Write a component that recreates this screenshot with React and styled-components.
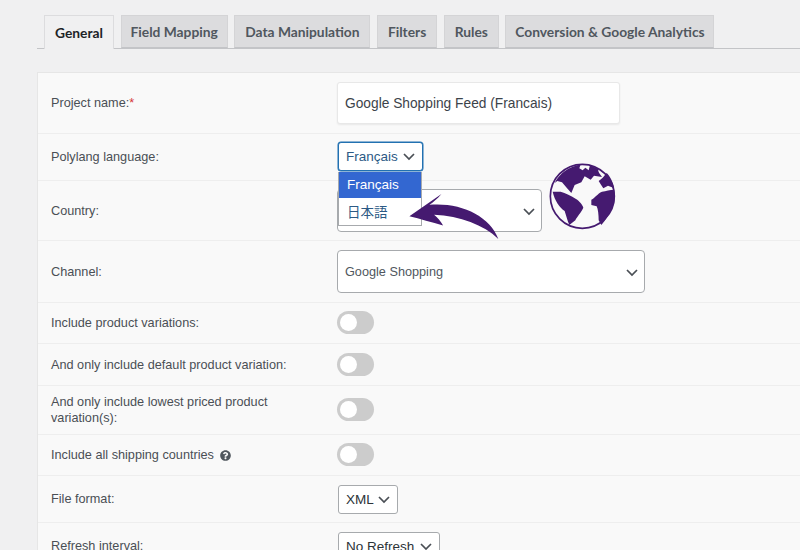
import React from 'react';
import styled, { createGlobalStyle } from 'styled-components';
import { FaQuestionCircle } from 'react-icons/fa';

const GlobalStyle = createGlobalStyle`
  html, body {
    margin: 0;
    padding: 0;
    background: #f0f0f1;
  }
`;

const Page = styled.div`
  position: relative;
  width: 800px;
  height: 550px;
  overflow: hidden;
  padding: 15px 0 0 37px;
  box-sizing: border-box;
  font-family: 'Liberation Sans', Arial, sans-serif;
  color: #4a4f55;
`;

const TabBar = styled.div`
  display: flex;
  gap: 6.7px;
  height: 33px;
  padding-left: 7px;
  border-bottom: 1px solid #c3c4c7;
`;

const Tab = styled.div`
  display: flex;
  align-items: center;
  box-sizing: border-box;
  height: ${(props) => (props.$active ? '34px' : '33px')};
  width: ${(props) => props.$width}px;
  justify-content: center;
  font-family: Lato, sans-serif;
  font-size: 13.8px;
  font-weight: 700;
  color: ${(props) => (props.$active ? '#1d2327' : '#50575e')};
  background: ${(props) => (props.$active ? '#f0f0f1' : '#dcdcde')};
  border: 1px solid ${(props) => (props.$active ? '#dcdcde' : '#d4d4d6')};
  border-bottom: ${(props) => (props.$active ? 'none' : '1px solid #c3c4c7')};
`;

const Panel = styled.div`
  margin-top: 23px;
  background: #f9f9f9;
  border-top: 1px solid #e6e6e6;
  border-left: 1px solid #e6e6e6;
`;

const Row = styled.div`
  display: grid;
  grid-template-columns: 286px 1fr;
  align-items: center;
  box-sizing: border-box;
  height: ${(props) => props.$height}px;
  padding-left: 13px;
  border-bottom: 1px solid #eeeeee;
`;

const Label = styled.div`
  max-width: 240px;
  font-size: 12.7px;
  line-height: 16px;
`;

const Required = styled.span`
  color: #d63638;
`;

const HelpIcon = styled(FaQuestionCircle)`
  margin-left: 6px;
  width: 11px;
  height: 11px;
  vertical-align: -1.5px;
  color: #50575e;
`;

const TextField = styled.div`
  display: flex;
  align-items: center;
  box-sizing: border-box;
  width: 283px;
  height: 42px;
  padding-left: 7px;
  font-size: 13.75px;
  color: #3c434a;
  background: #fff;
  border: 1px solid #e8e8e8;
  border-radius: 3px;
  box-shadow: 0 1px 2px rgba(0, 0, 0, 0.07);
`;

const SelectBox = styled.div`
  display: flex;
  align-items: center;
  justify-content: space-between;
  box-sizing: border-box;
  width: ${(props) => props.$width}px;
  height: 43px;
  padding: 0 4px 0 7px;
  font-size: 12.7px;
  color: #50575e;
  background: #fff;
  border: 1px solid #a7aaad;
  border-radius: 4px;
`;

const SmallSelect = styled.div`
  display: flex;
  align-items: center;
  justify-content: space-between;
  box-sizing: border-box;
  width: ${(props) => props.$width}px;
  height: 29px;
  margin-left: 1px;
  padding: 0 5px 0 7px;
  font-size: 13.5px;
  color: ${(props) => (props.$focused ? '#2c5a85' : '#2c3338')};
  background: #fff;
  border: 1px solid ${(props) => (props.$focused ? '#2271b1' : '#a7aaad')};
  border-radius: 3px;
  box-shadow: ${(props) => (props.$focused ? '0 0 0 0.5px #2271b1' : 'none')};
  white-space: nowrap;
`;

const Chevron = styled.svg`
  flex: none;
  width: 16px;
  height: 16px;
  margin-left: ${(props) => (props.$end ? 'auto' : '0')};
  fill: none;
  stroke: #4a4f55;
  stroke-width: 1.7;
`;

const ArrowDown = ({ end }) => (
  <Chevron viewBox="0 0 16 16" $end={end}>
    <polyline points="3,6 8,11 13,6" />
  </Chevron>
);

const LanguageSelect = styled.div`
  position: relative;
  margin-bottom: 2px;
`;

const LanguageMenu = styled.div`
  position: absolute;
  top: 30px;
  left: 1px;
  z-index: 2;
  box-sizing: border-box;
  width: 84px;
  height: 54px;
  background: #fff;
  border: 1px solid #a7aaad;
  border-top: none;
`;

const LanguageOption = styled.div`
  display: flex;
  align-items: center;
  height: 26px;
  padding-left: 8px;
  font-family: 'Liberation Sans', 'Noto Sans CJK JP', sans-serif;
  font-size: 13.5px;
  color: ${(props) => (props.$selected ? '#fff' : '#2c5a85')};
  background: ${(props) => (props.$selected ? '#3367d1' : '#fff')};
`;

const Toggle = styled.div`
  display: flex;
  align-items: center;
  box-sizing: border-box;
  width: 37px;
  height: 23px;
  margin-bottom: 1px;
  padding-left: 3px;
  background: #cccccc;
  border-radius: 12px;
`;

const Knob = styled.div`
  width: 17px;
  height: 17px;
  background: #fff;
  border-radius: 50%;
`;

const ArrowDrawing = styled.svg`
  position: absolute;
  left: 405px;
  top: 190px;
  z-index: 3;
  width: 97px;
  height: 52px;
`;

const GlobeDrawing = styled.svg`
  position: absolute;
  left: 540px;
  top: 155px;
  z-index: 3;
  width: 85px;
  height: 80px;
`;

const tabs = [
  { label: 'General', width: 70, active: true },
  { label: 'Field Mapping', width: 107 },
  { label: 'Data Manipulation', width: 136 },
  { label: 'Filters', width: 60 },
  { label: 'Rules', width: 55 },
  { label: 'Conversion & Google Analytics', width: 209 },
];

const toggleRows = [
  { label: 'Include product variations:', height: 41 },
  { label: 'And only include default product variation:', height: 42 },
  { label: 'And only include lowest priced product variation(s):', height: 49 },
];

const App = () => (
  <Page>
    <GlobalStyle />
    <TabBar>
      {tabs.map((tab) => (
        <Tab key={tab.label} $active={tab.active} $width={tab.width}>
          {tab.label}
        </Tab>
      ))}
    </TabBar>
    <Panel>
      <Row $height={61}>
        <Label>
          Project name:<Required>*</Required>
        </Label>
        <TextField>Google Shopping Feed (Francais)</TextField>
      </Row>
      <Row $height={47}>
        <Label>Polylang language:</Label>
        <LanguageSelect>
          <SmallSelect $width={85} $focused>
            Français
            <ArrowDown />
          </SmallSelect>
          <LanguageMenu>
            <LanguageOption $selected>Français</LanguageOption>
            <LanguageOption>日本語</LanguageOption>
          </LanguageMenu>
        </LanguageSelect>
      </Row>
      <Row $height={60}>
        <Label>Country:</Label>
        <SelectBox $width={205}>
          <ArrowDown end />
        </SelectBox>
      </Row>
      <Row $height={62}>
        <Label>Channel:</Label>
        <SelectBox $width={308}>
          Google Shopping
          <ArrowDown />
        </SelectBox>
      </Row>
      {toggleRows.map((row) => (
        <Row key={row.label} $height={row.height}>
          <Label>{row.label}</Label>
          <Toggle>
            <Knob />
          </Toggle>
        </Row>
      ))}
      <Row $height={41}>
        <Label>
          Include all shipping countries
          <HelpIcon />
        </Label>
        <Toggle>
          <Knob />
        </Toggle>
      </Row>
      <Row $height={47}>
        <Label>File format:</Label>
        <SmallSelect $width={60}>
          XML
          <ArrowDown />
        </SmallSelect>
      </Row>
      <Row $height={47}>
        <Label>Refresh interval:</Label>
        <SmallSelect $width={102}>
          No Refresh
          <ArrowDown />
        </SmallSelect>
      </Row>
    </Panel>
    <ArrowDrawing viewBox="255 180 290 155">
      <path
        fill="#451a70"
        d="M268 258 L364 192 C350 208 338 218 328 224 C420 216 508 256 534 326 C490 284 420 258 342 254 C352 262 362 274 369 286 C335 276 300 266 268 258 Z"
      />
    </ArrowDrawing>
    <GlobeDrawing viewBox="0 0 255 240">
      <circle cx="127" cy="124" r="96" fill="#f9f9f9" stroke="#451a70" strokeWidth="5" />
      <g fill="#451a70">
        <path d="M44 84 C58 56 86 36 122 28 L118 40 L128 46 L136 38 L146 46 L150 30 L176 42 C172 50 180 56 186 66 L162 62 L152 74 L134 64 L124 82 L104 90 L94 114 L80 98 L66 82 L52 78 Z" />
        <path d="M176 78 C186 72 192 64 200 54 C210 64 218 78 223 100 L204 92 L190 100 L182 88 Z" />
        <path d="M38 110 L62 110 C76 114 94 122 108 132 C118 138 128 150 130 158 C124 172 110 186 106 196 L88 210 C82 196 78 180 74 168 C60 158 44 138 38 110 Z" />
        <path d="M154 134 C166 128 172 116 186 110 C198 108 210 104 222 104 C228 124 224 146 214 162 C208 176 198 194 184 210 L176 196 C176 178 174 162 170 154 L154 150 Z" />
      </g>
    </GlobeDrawing>
  </Page>
);

export default App;
